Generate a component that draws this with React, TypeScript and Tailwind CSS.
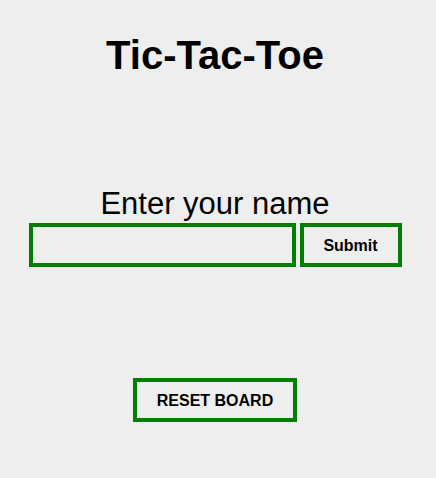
import { useState } from 'react';

export default function App() {
  const [name, setName] = useState('');

  return (
    <div className="min-h-[478px] w-full bg-[#eeeeee] font-['Liberation_Sans',Arial,sans-serif] text-black">
      <div className="w-[430px] flex flex-col items-center">
        <h1 className="mt-[32px] text-[40px] leading-[46px] font-bold">Tic-Tac-Toe</h1>

        <label htmlFor="name" className="mt-[108px] text-[31px] leading-[36px]">
          Enter your name
        </label>
        <div className="mt-[1px] flex items-center gap-[4px]">
          <input
            id="name"
            value={name}
            onChange={(e) => setName(e.target.value)}
            className="w-[267px] h-[44px] border-4 border-[#008000] bg-transparent px-2 text-base outline-none"
          />
          <button className="w-[102px] h-[44px] border-4 border-[#008000] pt-px text-base font-bold leading-[18px]">
            Submit
          </button>
        </div>

        <button className="mt-[111px] w-[164px] h-[44px] border-4 border-[#008000] pt-px text-base font-bold leading-[18px]">
          RESET BOARD
        </button>
      </div>
    </div>
  );
}
